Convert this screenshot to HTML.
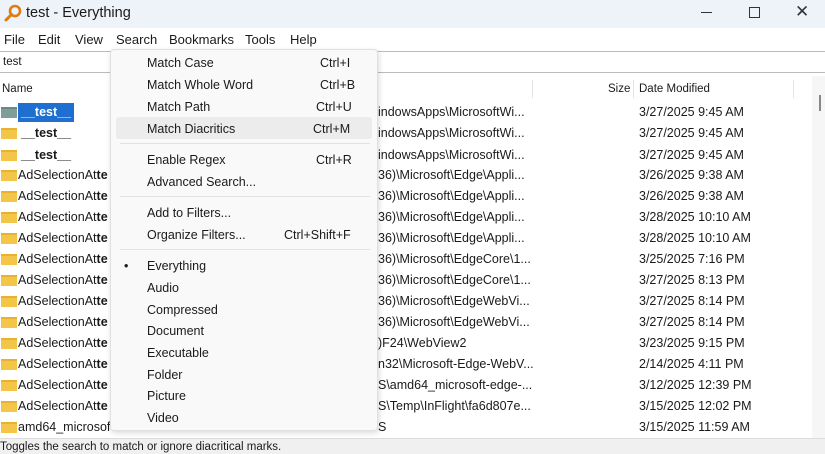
<!DOCTYPE html>
<html><head><meta charset="utf-8"><style>
*{margin:0;padding:0;box-sizing:border-box}
body{width:825px;height:454px;overflow:hidden;background:#fff;font-family:"Liberation Sans",sans-serif;font-size:12.5px;color:#1a1a1a;position:relative}
.a{position:absolute;white-space:nowrap}
.fold{position:absolute;left:1px;width:16px;height:11px;background:#f3c64a;border-top:2px solid #e8b230}
.row{position:absolute;left:0;height:21px;line-height:21px;width:812px}
.mi{position:absolute;left:147px;font-size:12.5px}
.sep{position:absolute;left:120px;width:250px;height:1px;background:#e2e2e2}
</style></head><body>
<div class="a" style="left:0;top:0;width:825px;height:28px;background:#eef2f9"></div>
<svg class="a" style="left:4px;top:4px" width="18" height="18" viewBox="0 0 18 18"><circle cx="11" cy="7" r="5" fill="none" stroke="#e07b10" stroke-width="2.6"/><line x1="7.5" y1="10.5" x2="2" y2="16" stroke="#e07b10" stroke-width="3" stroke-linecap="round"/></svg>
<div class="a" style="left:26px;top:5px;font-size:14.5px">test - Everything</div>
<div class="a" style="left:701px;top:12px;width:11px;height:1px;background:#333"></div>
<div class="a" style="left:749px;top:7px;width:11px;height:11px;border:1.3px solid #333"></div>
<div class="a" style="left:795px;top:2px;font-size:17px;color:#333">✕</div>
<div class="a" style="left:0;top:32px;font-size:13px">
<span class="a" style="left:4px">File</span><span class="a" style="left:38px">Edit</span><span class="a" style="left:75px">View</span><span class="a" style="left:116px">Search</span><span class="a" style="left:169px">Bookmarks</span><span class="a" style="left:245px">Tools</span><span class="a" style="left:290px">Help</span></div>
<div class="a" style="left:0;top:51px;width:825px;height:22px;border-top:1px solid #bbb;border-bottom:1px solid #bbb"></div>
<div class="a" style="left:3px;top:56px;font-size:11.5px">test</div>
<div class="a" style="left:2px;top:83px;font-size:11.5px">Name</div>
<div class="a" style="left:532px;top:80px;width:1px;height:18px;background:#e5e5e5"></div>
<div class="a" style="left:608px;top:83px;font-size:11.5px">Size</div>
<div class="a" style="left:633px;top:80px;width:1px;height:18px;background:#e5e5e5"></div>
<div class="a" style="left:639px;top:83px;font-size:11.5px">Date Modified</div>
<div class="a" style="left:793px;top:80px;width:1px;height:18px;background:#e5e5e5"></div>
<div class="a" style="left:812px;top:76px;width:13px;height:362px;background:#f6f6f6"></div>
<div class="a" style="left:819px;top:95px;width:2px;height:16px;background:#888"></div>

<div class="row" style="top:102px"><div class="fold" style="top:5px;background:#7f9e9a;border-color:#6a8985"></div><span class="a" style="left:18px;top:1px;height:19px;line-height:19px;background:#1e6fd0;color:#fff;font-weight:bold;padding:0 3px">__test__</span><span class="a" style="left:378px">indowsApps\MicrosoftWi...</span><span class="a" style="left:639px">3/27/2025 9:45 AM</span></div>
<div class="row" style="top:123px"><div class="fold" style="top:5px"></div><span class="a" style="left:21px;font-weight:bold">__test__</span><span class="a" style="left:378px">indowsApps\MicrosoftWi...</span><span class="a" style="left:639px">3/27/2025 9:45 AM</span></div>
<div class="row" style="top:145px"><div class="fold" style="top:5px"></div><span class="a" style="left:21px;font-weight:bold">__test__</span><span class="a" style="left:378px">indowsApps\MicrosoftWi...</span><span class="a" style="left:639px">3/27/2025 9:45 AM</span></div>
<div class="row" style="top:165px"><div class="fold" style="top:5px"></div><span class="a" style="left:18px">AdSelectionAt<b>te</b></span><span class="a" style="left:378px">36)\Microsoft\Edge\Appli...</span><span class="a" style="left:639px">3/26/2025 9:38 AM</span></div>
<div class="row" style="top:186px"><div class="fold" style="top:5px"></div><span class="a" style="left:18px">AdSelectionAt<b>te</b></span><span class="a" style="left:378px">36)\Microsoft\Edge\Appli...</span><span class="a" style="left:639px">3/26/2025 9:38 AM</span></div>
<div class="row" style="top:207px"><div class="fold" style="top:5px"></div><span class="a" style="left:18px">AdSelectionAt<b>te</b></span><span class="a" style="left:378px">36)\Microsoft\Edge\Appli...</span><span class="a" style="left:639px">3/28/2025 10:10 AM</span></div>
<div class="row" style="top:228px"><div class="fold" style="top:5px"></div><span class="a" style="left:18px">AdSelectionAt<b>te</b></span><span class="a" style="left:378px">36)\Microsoft\Edge\Appli...</span><span class="a" style="left:639px">3/28/2025 10:10 AM</span></div>
<div class="row" style="top:249px"><div class="fold" style="top:5px"></div><span class="a" style="left:18px">AdSelectionAt<b>te</b></span><span class="a" style="left:378px">36)\Microsoft\EdgeCore\1...</span><span class="a" style="left:639px">3/25/2025 7:16 PM</span></div>
<div class="row" style="top:270px"><div class="fold" style="top:5px"></div><span class="a" style="left:18px">AdSelectionAt<b>te</b></span><span class="a" style="left:378px">36)\Microsoft\EdgeCore\1...</span><span class="a" style="left:639px">3/27/2025 8:13 PM</span></div>
<div class="row" style="top:291px"><div class="fold" style="top:5px"></div><span class="a" style="left:18px">AdSelectionAt<b>te</b></span><span class="a" style="left:378px">36)\Microsoft\EdgeWebVi...</span><span class="a" style="left:639px">3/27/2025 8:14 PM</span></div>
<div class="row" style="top:312px"><div class="fold" style="top:5px"></div><span class="a" style="left:18px">AdSelectionAt<b>te</b></span><span class="a" style="left:378px">36)\Microsoft\EdgeWebVi...</span><span class="a" style="left:639px">3/27/2025 8:14 PM</span></div>
<div class="row" style="top:333px"><div class="fold" style="top:5px"></div><span class="a" style="left:18px">AdSelectionAt<b>te</b></span><span class="a" style="left:378px">)F24\WebView2</span><span class="a" style="left:639px">3/23/2025 9:15 PM</span></div>
<div class="row" style="top:354px"><div class="fold" style="top:5px"></div><span class="a" style="left:18px">AdSelectionAt<b>te</b></span><span class="a" style="left:378px">n32\Microsoft-Edge-WebV...</span><span class="a" style="left:639px">2/14/2025 4:11 PM</span></div>
<div class="row" style="top:375px"><div class="fold" style="top:5px"></div><span class="a" style="left:18px">AdSelectionAt<b>te</b></span><span class="a" style="left:378px">S\amd64_microsoft-edge-...</span><span class="a" style="left:639px">3/12/2025 12:39 PM</span></div>
<div class="row" style="top:396px"><div class="fold" style="top:5px"></div><span class="a" style="left:18px">AdSelectionAt<b>te</b></span><span class="a" style="left:378px">S\Temp\InFlight\fa6d807e...</span><span class="a" style="left:639px">3/15/2025 12:02 PM</span></div>
<div class="row" style="top:417px"><div class="fold" style="top:5px"></div><span class="a" style="left:18px">amd64_microsof</span><span class="a" style="left:378px">S</span><span class="a" style="left:639px">3/15/2025 11:59 AM</span></div>
<div class="a" style="left:0;top:438px;width:825px;height:16px;background:#f0f0f0;border-top:1px solid #ddd"></div>
<div class="a" style="left:0;top:441px;font-size:11.5px">Toggles the search to match or ignore diacritical marks.</div>

<div class="a" style="left:110px;top:49px;width:268px;height:382px;background:#f9f9f9;border:1px solid #e0e0e0;box-shadow:1px 2px 6px rgba(0,0,0,.15);border-radius:4px"></div>
<div class="a" style="left:116px;top:117px;width:256px;height:22px;background:#ececec;border-radius:3px"></div>
<div class="a" style="left:0;top:1px;width:370px">
<div class="mi" style="top:55px">Match Case</div><div class="a" style="left:320px;top:55px">Ctrl+I</div>
<div class="mi" style="top:77px">Match Whole Word</div><div class="a" style="left:320px;top:77px">Ctrl+B</div>
<div class="mi" style="top:99px">Match Path</div><div class="a" style="left:316px;top:99px">Ctrl+U</div>
<div class="mi" style="top:121px">Match Diacritics</div><div class="a" style="left:313px;top:121px">Ctrl+M</div>
<div class="sep" style="top:142px"></div>
<div class="mi" style="top:152px">Enable Regex</div><div class="a" style="left:316px;top:152px">Ctrl+R</div>
<div class="mi" style="top:174px">Advanced Search...</div>
<div class="sep" style="top:195px"></div>
<div class="mi" style="top:205px">Add to Filters...</div>
<div class="mi" style="top:227px">Organize Filters...</div><div class="a" style="left:284px;top:227px">Ctrl+Shift+F</div>
<div class="sep" style="top:248px"></div>
<div class="a" style="left:124px;top:258px">•</div>
<div class="mi" style="top:258px">Everything</div>
<div class="mi" style="top:280px">Audio</div>
<div class="mi" style="top:302px">Compressed</div>
<div class="mi" style="top:323px">Document</div>
<div class="mi" style="top:345px">Executable</div>
<div class="mi" style="top:367px">Folder</div>
<div class="mi" style="top:388px">Picture</div>
<div class="mi" style="top:410px">Video</div>
</div>
</body></html>
